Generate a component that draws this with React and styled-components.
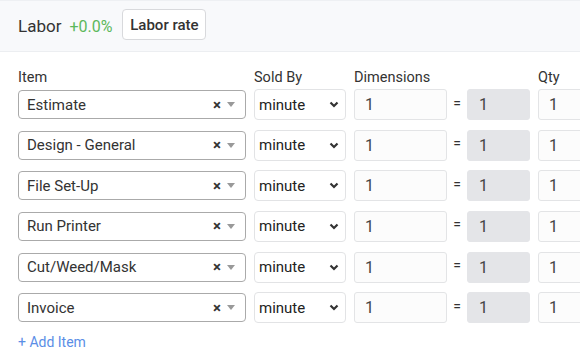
import React from 'react';
import styled, { createGlobalStyle } from 'styled-components';

const items = ['Estimate', 'Design - General', 'File Set-Up', 'Run Printer', 'Cut/Weed/Mask', 'Invoice'];

const App = () => {
	return (
		<>
			<GlobalStyle />
			<Panel>
				<Header>
					<Title>Labor</Title>
					<Change>+0.0%</Change>
					<RateButton>Labor rate</RateButton>
				</Header>
				<Body>
					<Grid>
						<Label>Item</Label>
						<Label>Sold By</Label>
						<Label $span={3}>Dimensions</Label>
						<Label>Qty</Label>
					</Grid>
					<Rows>
						{items.map((name) => (
							<Grid key={name}>
								<ItemSelect>
									<ItemName>{name}</ItemName>
									<Clear>×</Clear>
									<Caret />
								</ItemSelect>
								<SoldBy>
									<span>minute</span>
									<svg width='10' height='7' viewBox='0 0 10 7'>
										<path d='M1.5 1.5 L5 5 L8.5 1.5' fill='none' stroke='#333' strokeWidth='2.2' />
									</svg>
								</SoldBy>
								<Field>1</Field>
								<Equals>=</Equals>
								<Field $computed>1</Field>
								<Field>1</Field>
							</Grid>
						))}
					</Rows>
					<AddItem>+ Add Item</AddItem>
				</Body>
			</Panel>
		</>
	);
};

const GlobalStyle = createGlobalStyle`
	body {
		margin: 0;
		background: #fff;
		font-family: Roboto, "Liberation Sans", sans-serif;
		color: #333;
		overflow: hidden;
	}
`;

const Panel = styled.div`
	width: 580px;
	height: 360px;
	overflow: hidden;
`;

const Header = styled.div`
	display: flex;
	align-items: center;
	height: 52px;
	padding: 0 18px;
	background: #f8f9fb;
	border-top: 1px solid #eef0f3;
	border-bottom: 1px solid #eceef1;
	box-sizing: border-box;
`;

const Title = styled.span`
	font-size: 17px;
	color: #333;
`;

const Change = styled.span`
	font-size: 16px;
	color: #5cb85c;
	margin-left: 8px;
`;

const RateButton = styled.button`
	margin-left: 10px;
	margin-top: -3px;
	height: 31px;
	width: 84px;
	padding: 0;
	background: #fff;
	border: 1px solid #d8d9dc;
	border-radius: 4px;
	font-family: Roboto, "Liberation Sans", sans-serif;
	font-size: 15px;
	font-weight: 500;
	color: #333;
`;

const Body = styled.div`
	padding: 16px 0 0 18px;
`;

const Grid = styled.div`
	display: grid;
	grid-template-columns: 228px 92px 93px 4px 63px 80px;
	column-gap: 8px;
	align-items: center;
`;

const Label = styled.div`
	grid-column: span ${(p) => p.$span || 1};
	font-size: 14.5px;
	line-height: 20px;
	color: #333;
`;

const Rows = styled.div`
	display: flex;
	flex-direction: column;
	gap: 9.66px;
	margin-top: 1px;
`;

const ItemSelect = styled.div`
	display: flex;
	align-items: center;
	height: 29px;
	box-sizing: border-box;
	border: 1px solid #aaa;
	border-radius: 4px;
	padding: 0 8px;
	background: #fff;
`;

const ItemName = styled.span`
	flex: 1;
	font-size: 15px;
	color: #333;
`;

const Clear = styled.span`
	font-size: 15px;
	font-weight: 700;
	color: #333;
	margin-right: 6px;
`;

const Caret = styled.span`
	width: 0;
	height: 0;
	border-left: 4px solid transparent;
	border-right: 4px solid transparent;
	border-top: 5px solid #999;
	margin-right: 2px;
`;

const SoldBy = styled.div`
	display: flex;
	align-items: center;
	justify-content: space-between;
	height: 31px;
	box-sizing: border-box;
	border: 1px solid #e2e3e5;
	border-radius: 4px;
	padding: 0 6px 0 4px;
	background: #fff;
	font-size: 15px;
	color: #222;
`;

const Field = styled.div`
	display: flex;
	align-items: center;
	height: 31px;
	box-sizing: border-box;
	border: 1px solid ${(p) => (p.$computed ? '#e4e5e8' : '#e3e4e6')};
	border-radius: 3px;
	padding-left: ${(p) => (p.$computed ? '11px' : '10px')};
	background: ${(p) => (p.$computed ? '#e4e5e8' : '#fcfcfc')};
	font-size: 16px;
	color: #444;
`;

const Equals = styled.div`
	justify-self: center;
	font-size: 14px;
	color: #333;
	margin-top: -4px;
`;

const AddItem = styled.a`
	display: inline-block;
	margin-top: 11px;
	font-size: 14px;
	color: #5a8ee6;
	cursor: pointer;
`;

export default App;
